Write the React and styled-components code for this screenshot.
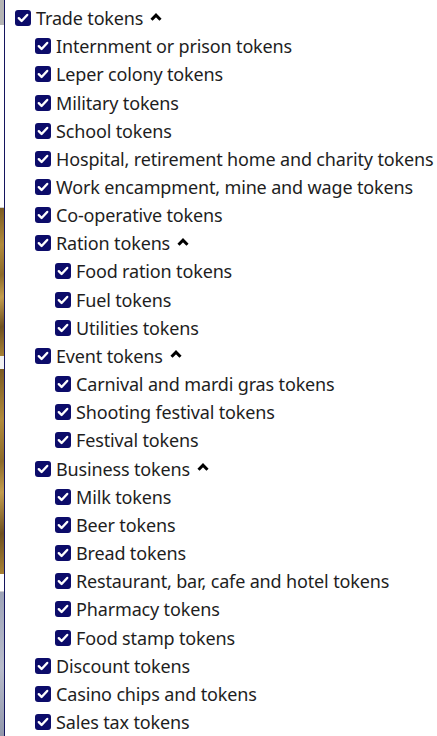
import React from "react";
import styled, { createGlobalStyle } from "styled-components";

const GlobalStyle = createGlobalStyle`
  html, body {
    margin: 0;
    padding: 0;
    background: #fff;
  }
  body {
    font-family: "Noto Sans", "Open Sans", sans-serif;
    overflow: hidden;
  }
`;

const Page = styled.div`
  display: flex;
  width: 437px;
  height: 736px;
  overflow: hidden;
`;

const Behind = styled.div`
  width: 4px;
  flex: none;
  display: flex;
  flex-direction: column;
  overflow: hidden;
`;

const Band = styled.div`
  flex: none;
  height: ${(p) => p.h}px;
  background: ${(p) => p.bg};
  border-bottom: ${(p) => (p.line ? "1px solid #cfcfcf" : "none")};
`;

const Panel = styled.div`
  flex: 1;
  border-left: 1px solid #14145e;
  background: #fff;
  padding: 4px 0 0 10px;
  overflow: hidden;
`;

const List = styled.ul`
  list-style: none;
  margin: 0;
  padding: 0;
`;

const Row = styled.li`
  display: flex;
  align-items: center;
  gap: 5px;
  height: 28.16px;
  padding-left: ${(p) => p.level * 20}px;
  font-size: 18px;
  letter-spacing: -0.15px;
  color: #1e1e1e;
  white-space: nowrap;
`;

const Box = styled.span`
  flex: none;
  width: 16px;
  height: 16px;
  border-radius: 3px;
  background: #0c0c6a;
  display: flex;
  align-items: center;
  justify-content: center;
`;

const Caret = styled.svg`
  flex: none;
  margin-left: 2px;
  margin-bottom: 3px;
`;

const items = [
  ["Trade tokens", 0, true],
  ["Internment or prison tokens", 1],
  ["Leper colony tokens", 1],
  ["Military tokens", 1],
  ["School tokens", 1],
  ["Hospital, retirement home and charity tokens", 1],
  ["Work encampment, mine and wage tokens", 1],
  ["Co-operative tokens", 1],
  ["Ration tokens", 1, true],
  ["Food ration tokens", 2],
  ["Fuel tokens", 2],
  ["Utilities tokens", 2],
  ["Event tokens", 1, true],
  ["Carnival and mardi gras tokens", 2],
  ["Shooting festival tokens", 2],
  ["Festival tokens", 2],
  ["Business tokens", 1, true],
  ["Milk tokens", 2],
  ["Beer tokens", 2],
  ["Bread tokens", 2],
  ["Restaurant, bar, cafe and hotel tokens", 2],
  ["Pharmacy tokens", 2],
  ["Food stamp tokens", 2],
  ["Discount tokens", 1],
  ["Casino chips and tokens", 1],
  ["Sales tax tokens", 1],
];

const Check = () => (
  <Box>
    <svg width="12" height="10" viewBox="0 0 12 10">
      <polyline
        points="1.8,5.2 4.6,8 10.2,2"
        fill="none"
        stroke="#fff"
        strokeWidth="2.4"
        strokeLinecap="round"
        strokeLinejoin="round"
      />
    </svg>
  </Box>
);

const gold =
  "linear-gradient(160deg, #7a5a22 0%, #b08a3c 25%, #8c6a2a 45%, #c29c4e 60%, #6e5020 80%, #a88236 100%)";

export default function App() {
  return (
    <>
      <GlobalStyle />
      <Page>
        <Behind>
          <Band h={25} bg="#b4b4b4" />
          <Band h={182} bg="#fff" line />
          <Band h={148} bg={gold} />
          <Band h={13} bg="#f2f2f2" />
          <Band h={205} bg={gold} />
          <Band h={17} bg="#fff" line />
          <Band h={150} bg="linear-gradient(180deg, #9ea4b8, #b8bccb 50%, #8e94a8)" />
        </Behind>
        <Panel>
          <List>
            {items.map(([label, level, open]) => (
              <Row key={label} level={level}>
                <Check />
                <span>{label}</span>
                {open && (
                  <Caret width="12" height="8" viewBox="0 0 12 8">
                    <polyline
                      points="1.5,6.8 6,2.2 10.5,6.8"
                      fill="none"
                      stroke="#000"
                      strokeWidth="3"
                    />
                  </Caret>
                )}
              </Row>
            ))}
          </List>
        </Panel>
      </Page>
    </>
  );
}
